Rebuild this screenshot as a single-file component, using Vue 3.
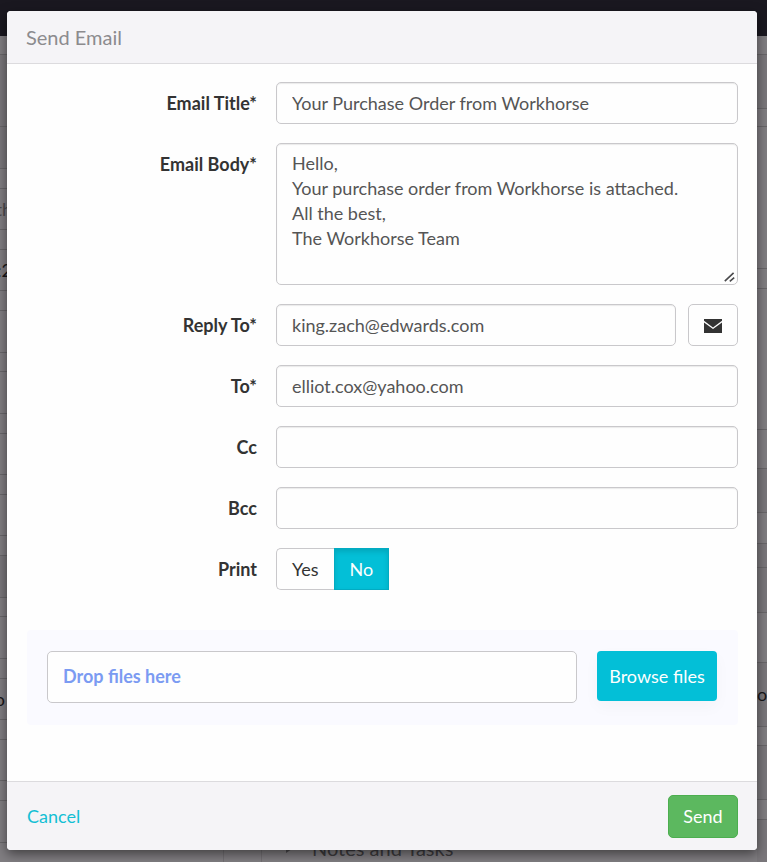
<script setup>
import { ref } from 'vue'

const title = ref('Your Purchase Order from Workhorse')
const body = ref('Hello,\nYour purchase order from Workhorse is attached.\nAll the best,\nThe Workhorse Team')
const replyTo = ref('king.zach@edwards.com')
const to = ref('elliot.cox@yahoo.com')
const cc = ref('')
const bcc = ref('')
const print = ref('no')

const leftRows = [
  { h: 19 }, { h: 72, tone: 'dim' }, { h: 42, tone: 'dim' }, { h: 20 }, { h: 41, text: 'th', tone: 'soft' }, { h: 20 },
  { h: 41, text: ':2' }, { h: 20 }, { h: 42 }, { h: 19 }, { h: 42 }, { h: 20 },
  { h: 41 }, { h: 20 }, { h: 41 }, { h: 20 }, { h: 42, tone: 'dim' }, { h: 19 }, { h: 42 },
  { h: 20 }, { h: 41, text: 'o', tone: 'inset' }, { h: 20 }, { h: 41 }, { h: 20 }, { h: 42 }, { h: 20 },
]
const rightRows = [
  { h: 19 }, { h: 54, tone: 'dim' }, { h: 18 }, { h: 142 }, { h: 20 }, { h: 141 },
  { h: 39 }, { h: 44, tone: 'dim' }, { h: 31 }, { h: 24, tone: 'dim' }, { h: 45, tone: 'dim' }, { h: 50 },
  { h: 64, text: 'or', tone: 'dim' }, { h: 19 }, { h: 54, tone: 'dim' }, { h: 20 }, { h: 43, tone: 'dim' },
]
</script>

<template>
  <div class="page">
    <div class="backdrop" aria-hidden="true">
      <div class="topbar"></div>
      <div class="columns">
        <div class="rows rows-left">
          <div v-for="(r, i) in leftRows" :key="i" class="row" :class="r.tone" :style="{ height: r.h + 'px' }">{{ r.text }}</div>
        </div>
        <div class="rows rows-right">
          <div v-for="(r, i) in rightRows" :key="i" class="row" :class="r.tone" :style="{ height: r.h + 'px' }">{{ r.text }}</div>
        </div>
      </div>
      <div class="section">
        <span class="gutter"></span>
        <span class="caret"></span>
        <span>Notes and Tasks</span>
      </div>
    </div>

    <form class="modal" role="dialog" aria-labelledby="modal-title" @submit.prevent>
      <header class="modal-header">
        <h1 id="modal-title">Send Email</h1>
      </header>

      <div class="modal-body">
        <div class="fields">
          <label for="email-title">Email Title*</label>
          <input id="email-title" v-model="title" class="control" type="text">

          <label for="email-body">Email Body*</label>
          <div class="text-area">
            <textarea id="email-body" v-model="body" class="control"></textarea>
            <svg class="grip" width="11" height="10" viewBox="0 0 11 10" aria-hidden="true">
              <path d="M0.8 9.2L9.6 0.8M5.8 9.4L10.2 5.6" fill="none" stroke="#4a4a4c" stroke-width="1.6" />
            </svg>
          </div>

          <label for="reply-to">Reply To*</label>
          <div class="with-button">
            <input id="reply-to" v-model="replyTo" class="control" type="text">
            <button class="icon-button" type="button" aria-label="Choose address">
              <svg width="18" height="14" viewBox="0 0 18 14">
                <path fill="#333" d="M0 0h18v1.8L9 8.4 0 1.8z" />
                <path fill="#333" d="M0 3.4l9 6.7 9-6.7V14H0z" />
              </svg>
            </button>
          </div>

          <label for="to">To*</label>
          <input id="to" v-model="to" class="control" type="text">

          <label for="cc">Cc</label>
          <input id="cc" v-model="cc" class="control" type="text">

          <label for="bcc">Bcc</label>
          <input id="bcc" v-model="bcc" class="control" type="text">

          <span id="print-label" class="field-label">Print</span>
          <div class="toggle" role="radiogroup" aria-labelledby="print-label">
            <label class="option yes" :class="{ active: print === 'yes' }">
              <input v-model="print" type="radio" name="print" value="yes">Yes
            </label>
            <label class="option" :class="{ active: print === 'no' }">
              <input v-model="print" type="radio" name="print" value="no">No
            </label>
          </div>
        </div>

        <div class="upload">
          <div class="drop">Drop files here</div>
          <button class="browse" type="button">Browse files</button>
        </div>
      </div>

      <footer class="modal-footer">
        <a href="#">Cancel</a>
        <button class="send" type="submit">Send</button>
      </footer>
    </form>
  </div>
</template>

<style>
body {
  background: #817e82;
}
</style>

<style scoped>
.page,
.page * {
  box-sizing: border-box;
}
.page {
  position: relative;
  min-height: 100vh;
  padding: 11px 10px 12px 7px;
  overflow: hidden;
  font-family: Lato, "Liberation Sans", sans-serif;
  font-size: 18px;
  line-height: 25px;
  color: #333;
}
.backdrop {
  position: absolute;
  inset: 0;
  overflow: hidden;
  background: #817e82;
}
.topbar {
  height: 36px;
  background: #1a1820;
}
.columns {
  display: flex;
  justify-content: space-between;
}
.rows-left {
  width: 12px;
}
.rows-right {
  width: 10px;
}
.row {
  display: flex;
  align-items: center;
  border-bottom: 1px solid #69676a;
  color: #18171a;
}
.rows-left .row {
  justify-content: flex-end;
}
.row.dim {
  background: #7a777b;
}
.row.soft {
  color: #4c4a4d;
}
.row.inset {
  padding-right: 7px;
}
.section {
  position: absolute;
  left: 223px;
  bottom: 0;
  display: flex;
  align-items: center;
  height: 27px;
  font-size: 20px;
  color: #3d3b3e;
}
.gutter {
  width: 39px;
  height: 100%;
  border: solid #737074;
  border-width: 0 1px;
}
.caret {
  margin: 0 20px 0 24px;
  border: 4px solid transparent;
  border-left: 6px solid #4c4a4d;
  border-right: 0;
}
.modal {
  position: relative;
  display: flex;
  flex-direction: column;
  min-height: calc(100vh - 23px);
  background: #fefefe;
  border-radius: 4px;
  box-shadow: 0 4px 12px rgba(0, 0, 0, 0.5);
  overflow: hidden;
}
.modal-header {
  padding: 14px 19px 13px;
  background: #f5f4f7;
  border-bottom: 1px solid #dcdbde;
}
.modal-header h1 {
  margin: 0;
  font-size: 20px;
  line-height: 25px;
  font-weight: 400;
  color: #8c8b8e;
}
.modal-body {
  flex: 1;
  padding: 18px 19px 20px 20px;
}
.fields {
  display: grid;
  grid-template-columns: 230px 1fr;
  gap: 19px;
}
.fields > label,
.field-label {
  padding-top: 9px;
  text-align: right;
  font-weight: 700;
}
.control {
  display: block;
  width: 100%;
  height: 42px;
  margin: 0;
  padding: 7px 15px;
  font: inherit;
  color: #555;
  background: #fefefe;
  border: 1px solid #c9c8cb;
  border-radius: 5px;
  box-shadow: inset 0 1px 1px rgba(0, 0, 0, 0.08);
  outline: none;
}
.text-area {
  position: relative;
}
textarea.control {
  height: 142px;
  resize: vertical;
}
textarea.control::-webkit-resizer {
  background: transparent;
}
.grip {
  position: absolute;
  right: 3px;
  bottom: 3px;
  pointer-events: none;
}
.with-button {
  display: flex;
  gap: 12px;
}
.icon-button {
  flex: 0 0 50px;
  display: flex;
  align-items: center;
  justify-content: center;
  padding: 2px 0 0;
  background: #fefefe;
  border: 1px solid #c9c8cb;
  border-radius: 5px;
}
.toggle {
  display: flex;
}
.option {
  position: relative;
  display: flex;
  align-items: center;
  height: 42px;
  padding: 0 15px;
  border: 1px solid #c9c8cb;
}
.option.yes {
  border-right: 0;
  border-radius: 5px 0 0 5px;
}
.option input {
  position: absolute;
  inset: 0;
  margin: 0;
  opacity: 0;
}
.option.active {
  color: #fefefe;
  background: #03bfd7;
  border-color: #02abc2;
  box-shadow: inset 0 3px 5px rgba(0, 0, 0, 0.12);
}
.upload {
  display: flex;
  align-items: flex-start;
  gap: 20px;
  margin-top: 40px;
  padding: 21px 21px 22px 20px;
  background: #fafaff;
  border-radius: 4px;
}
.drop {
  flex: 1;
  height: 52px;
  padding: 12px 15px;
  font-weight: 700;
  color: #7b9bf2;
  background: #fefefe;
  border: 1px solid #c9c8cb;
  border-radius: 5px;
}
.browse {
  width: 120px;
  height: 50px;
  padding: 0;
  font: inherit;
  color: #fefefe;
  white-space: nowrap;
  background: #03bfd7;
  border: 0;
  border-radius: 4px;
  box-shadow: 0 6px 16px rgba(0, 0, 0, 0.03);
}
.modal-footer {
  display: flex;
  align-items: center;
  justify-content: space-between;
  padding: 13px 19px 12px 20px;
  background: #f5f4f7;
  border-top: 1px solid #dcdbde;
}
.modal-footer a {
  color: #13bfd4;
  text-decoration: none;
}
.send {
  width: 70px;
  height: 43px;
  padding: 0;
  font: inherit;
  color: #fefefe;
  background: #5cb85f;
  border: 1px solid #4cae4f;
  border-radius: 5px;
}
</style>
